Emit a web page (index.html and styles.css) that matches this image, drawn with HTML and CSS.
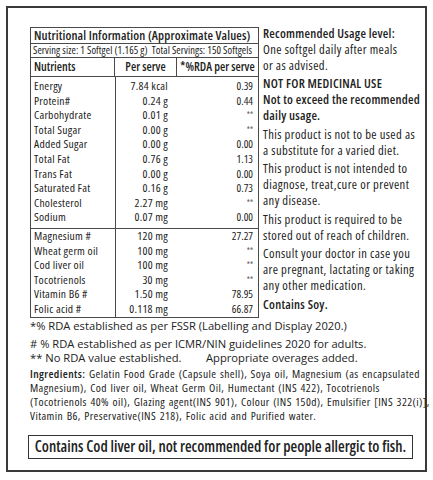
FILE: index.html
```html
<!DOCTYPE html>
<html lang="en">
<head>
    <meta charset="UTF-8">
    <meta name="viewport" content="width=device-width, initial-scale=1.0">
    <title>Nutritional Information</title>
    <link rel="stylesheet" href="styles.css">
</head>
<body>
    <div class="label">
        <div class="top">
            <!-- Nutrition table -->
            <div class="facts">
                <div class="facts-title">Nutritional Information (Approximate Values)</div>
                <div class="facts-serving">Serving size: 1 Softgel (1.165 g)&nbsp; Total Servings: 150 Softgels</div>
                <div class="facts-head">
                    <div class="col-name">Nutrients</div>
                    <div class="col-serve">Per serve</div>
                    <div class="col-rda">*%RDA per serve</div>
                </div>
                <div class="facts-group">
                    <div class="row"><span class="col-name">Energy</span><span class="col-serve">7.84 kcal</span><span class="col-rda">0.39</span></div>
                    <div class="row"><span class="col-name">Protein#</span><span class="col-serve">0.24 g</span><span class="col-rda">0.44</span></div>
                    <div class="row"><span class="col-name">Carbohydrate</span><span class="col-serve">0.01 g</span><span class="col-rda star">**</span></div>
                    <div class="row"><span class="col-name">Total Sugar</span><span class="col-serve">0.00 g</span><span class="col-rda star">**</span></div>
                    <div class="row"><span class="col-name">Added Sugar</span><span class="col-serve">0.00 g</span><span class="col-rda">0.00</span></div>
                    <div class="row"><span class="col-name">Total Fat</span><span class="col-serve">0.76 g</span><span class="col-rda">1.13</span></div>
                    <div class="row"><span class="col-name">Trans Fat</span><span class="col-serve">0.00 g</span><span class="col-rda">0.00</span></div>
                    <div class="row"><span class="col-name">Saturated Fat</span><span class="col-serve">0.16 g</span><span class="col-rda">0.73</span></div>
                    <div class="row"><span class="col-name">Cholesterol</span><span class="col-serve">2.27 mg</span><span class="col-rda star">**</span></div>
                    <div class="row"><span class="col-name">Sodium</span><span class="col-serve">0.07 mg</span><span class="col-rda">0.00</span></div>
                </div>
                <div class="facts-group second">
                    <div class="row"><span class="col-name">Magnesium #</span><span class="col-serve">120 mg</span><span class="col-rda">27.27</span></div>
                    <div class="row"><span class="col-name">Wheat germ oil</span><span class="col-serve">100 mg</span><span class="col-rda star">**</span></div>
                    <div class="row"><span class="col-name">Cod liver oil</span><span class="col-serve">100 mg</span><span class="col-rda star">**</span></div>
                    <div class="row"><span class="col-name">Tocotrienols</span><span class="col-serve">30 mg</span><span class="col-rda star">**</span></div>
                    <div class="row"><span class="col-name">Vitamin B6 #</span><span class="col-serve">1.50 mg</span><span class="col-rda">78.95</span></div>
                    <div class="row"><span class="col-name">Folic acid #</span><span class="col-serve">0.118 mg</span><span class="col-rda">66.87</span></div>
                </div>
            </div>

            <!-- Usage notes -->
            <div class="notes">
                <p><b>Recommended Usage level:</b><br>One softgel daily after meals<br>or as advised.</p>
                <p><b>NOT FOR MEDICINAL USE<br>Not to exceed the recommended<br>daily usage.</b></p>
                <p>This product is not to be used as<br>a substitute for a varied diet.</p>
                <p>This product is not intended to<br>diagnose, treat,cure or prevent<br>any disease.</p>
                <p>This product is required to be<br>stored out of reach of children.</p>
                <p>Consult your doctor in case you<br>are pregnant, lactating or taking<br>any other medication.</p>
                <p><b>Contains Soy.</b></p>
            </div>
        </div>

        <div class="footnotes">
            <p class="fn-first">*% RDA established as per FSSR (Labelling and Display 2020.)</p>
            <p># % RDA established as per ICMR/NIN guidelines 2020 for adults.</p>
            <p><span class="fn-left">** No RDA value established.</span>Appropriate overages added.</p>
        </div>

        <p class="ingredients"><b>Ingredients:</b> Gelatin Food Grade (Capsule shell), Soya oil, Magnesium (as encapsulated<br>Magnesium), Cod liver oil, Wheat Germ Oil, Humectant (INS 422), Tocotrienols<br>(Tocotrienols 40% oil), Glazing agent(INS 901), Colour (INS 150d), Emulsifier [INS 322(i)],<br>Vitamin B6, Preservative(INS 218), Folic acid and Purified water.</p>

        <div class="warning">Contains Cod liver oil, not recommended for people allergic to fish.</div>
    </div>
</body>
</html>
```

FILE: styles.css
```css
body {
    margin: 0;
    background: #fff;
    font-family: 'Open Sans', 'Liberation Sans', sans-serif;
    font-stretch: 75%;
    color: #222;
}

.label {
    box-sizing: border-box;
    width: 421px;
    height: 466px;
    margin: 6px 0 0 6px;
    border: 2px solid #3a3a3a;
    padding: 19px 0 0 22px;
}

.top {
    display: flex;
    align-items: flex-start;
}

/* Nutrition table */
.facts {
    width: 229px;
    box-sizing: border-box;
    border: 1px solid #4a4a4a;
}

.facts-title {
    height: 15px;
    line-height: 15px;
    padding-left: 3px;
    font-size: 12.6px;
    font-weight: 600;
    letter-spacing: 0.15px;
    border-bottom: 1px solid #4a4a4a;
    white-space: nowrap;
}

.facts-serving {
    height: 13px;
    line-height: 13px;
    padding-left: 2px;
    font-size: 10.5px;
    font-stretch: 87.5%;
    letter-spacing: 0.1px;
    border-bottom: 1px solid #4a4a4a;
    white-space: nowrap;
}

.facts-head {
    display: flex;
    height: 18px;
    line-height: 18px;
    font-size: 12px;
    font-weight: 600;
    border-bottom: 1px solid #4a4a4a;
}

.col-name {
    width: 84px;
    padding-left: 3px;
    box-sizing: border-box;
    border-right: 1px solid #4a4a4a;
    white-space: nowrap;
}

.col-serve {
    width: 62px;
    box-sizing: border-box;
    text-align: right;
    padding-right: 9px;
    white-space: nowrap;
}

.col-rda {
    flex: 1;
    text-align: right;
    padding-right: 5px;
    white-space: nowrap;
}

.facts-head .col-serve {
    text-align: center;
    padding-right: 0;
    border-right: 1px solid #4a4a4a;
}

.facts-head .col-rda {
    text-align: center;
    padding-right: 0;
}

.facts-group {
    padding: 2px 0 3px;
    background: linear-gradient(#4a4a4a, #4a4a4a) 84px 0 / 1px 100% no-repeat;
}

.facts-group.second {
    border-top: 1px solid #4a4a4a;
    padding: 0;
}

.row {
    display: flex;
    height: 14.6px;
    line-height: 14.6px;
    font-size: 11.6px;
    letter-spacing: 0.25px;
}

.row .col-name {
    border-right: none;
}

.row .col-rda {
    font-size: 11px;
    letter-spacing: 0;
}

.row .star {
    font-size: 8px;
    color: #555;
}

/* Usage notes */
.notes {
    margin-left: 4px;
    margin-top: -1px;
    font-size: 12.6px;
    line-height: 15.8px;
    letter-spacing: 0.4px;
    white-space: nowrap;
}

.notes p {
    margin: 0 0 3px;
}

.notes b {
    font-weight: 600;
    letter-spacing: 0.25px;
}

/* Footnotes */
.footnotes {
    margin-top: 1px;
    font-size: 11.2px;
    font-stretch: 100%;
    line-height: 14.5px;
    white-space: nowrap;
}

.footnotes p {
    margin: 0;
}

.footnotes .fn-first {
    margin-bottom: 3.5px;
}

.fn-left {
    display: inline-block;
    width: 176px;
}

.ingredients {
    margin: 1px 0 0;
    font-size: 11.5px;
    font-stretch: 87.5%;
    line-height: 14.2px;
    letter-spacing: 0.4px;
    word-spacing: 1px;
    white-space: nowrap;
}

.ingredients b {
    font-weight: 600;
}

.warning {
    width: 385px;
    box-sizing: border-box;
    margin: 12px 0 0 -2px;
    border: 1.5px solid #333;
    height: 24px;
    line-height: 21px;
    text-align: center;
    font-size: 15.3px;
    font-weight: 600;
    white-space: nowrap;
}
```
